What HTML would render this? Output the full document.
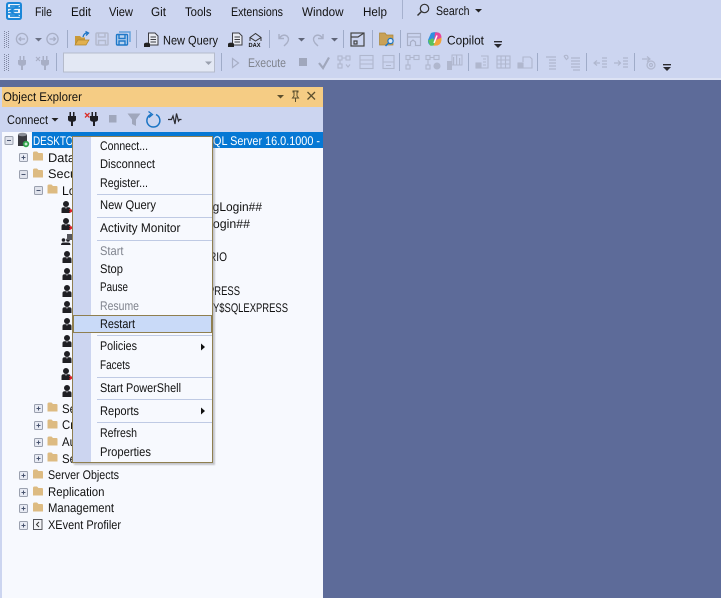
<!DOCTYPE html>
<html><head><meta charset="utf-8"><title>SSMS Object Explorer</title>
<style>
html,body{margin:0;padding:0;width:721px;height:598px;overflow:hidden;background:#5D6B99}
svg{display:block;filter:blur(.3px)}
text{font-family:"Liberation Sans",sans-serif;font-size:12.5px;fill:#111;text-rendering:geometricPrecision}
.w{fill:#fff}
.dis{fill:#80848e}
</style></head><body>
<svg width="721" height="598" viewBox="0 0 721 598" xmlns="http://www.w3.org/2000/svg">
<defs>
<filter id="b" x="-10%" y="-10%" width="120%" height="120%"><feGaussianBlur stdDeviation="0.8"/></filter>
<g id="folder"><path d="M0 2 Q0 .5 1.500 .5 H4 L5.500 2 H9 Q10 2 10 3 V9.500 H0Z" fill="#DDBB82"/></g>
<g id="plus"><rect x=".5" y=".5" width="8" height="8" rx="1" fill="#E8EBF4" stroke="#9AA0AE"/><path d="M2.500 4.500H6.500M4.500 2.500V6.500" stroke="#4A5570" fill="none"/></g>
<g id="minus"><rect x=".5" y=".5" width="8" height="8" rx="1" fill="#E0E3EC" stroke="#9AA0AE"/><path d="M2.500 4.500H6.500" stroke="#4A5570" fill="none"/></g>
<g id="user"><circle cx="5" cy="3" r="3" fill="#1f1f24"/><path d="M0.500 12V8.300Q0.500 6.300 2.500 6.300H7.500Q9.500 6.300 9.500 8.300V12Z" fill="#1f1f24"/><path d="M4.300 6.500L5 8L5.700 6.500Z" fill="#d8d8e0"/></g>
<g id="userx"><use href="#user"/><path d="M8.500 8l3.500 3.500M12 8l-3.500 3.500" stroke="#E0202A" stroke-width="1.500"/></g>
<g id="plug"><path d="M1.500 0H3V4H5V0H6.500V4H8V7.500Q8 9.500 5 9.700V14H3V9.700Q0 9.500 0 7.500V4H1.500Z"/></g>
<path id="tri" d="M0 0H7L3.500 3.500Z"/>
<g id="ovf"><path d="M0 0H8V1.400H0Z M0 3H8L4 7Z" fill="#2a2a30"/></g>
<g id="grip"><path d="M.5 0V17M2.500 1V17M4.500 0V17" stroke="#7f86a0" stroke-dasharray="1 1" fill="none"/></g>
</defs>

<rect width="721" height="80" fill="#CCD5F0"/>
<rect y="78" width="721" height="2" fill="#DCE2F4"/>
<rect y="80" width="721" height="518" fill="#5D6B99"/>

<!-- App logo -->
<g fill="none" stroke="#1A86D8">
<path d="M9 3H19Q21 3 21 5V17Q21 19 19 19H9Q7 19 7 17V5Q7 3 9 3Z" fill="#EAF2FA" stroke-width="2"/>
<path d="M7 8H21M7 14H21M10 6H18L10 11H18M10 11L18 16H10" stroke-width="1.700"/>
</g>

<!-- Menu -->
<text x="35" y="16" textLength="17" lengthAdjust="spacingAndGlyphs">File</text>
<text x="71" y="16" textLength="20" lengthAdjust="spacingAndGlyphs">Edit</text>
<text x="109" y="16" textLength="24" lengthAdjust="spacingAndGlyphs">View</text>
<text x="151" y="16" textLength="15" lengthAdjust="spacingAndGlyphs">Git</text>
<text x="185" y="16" textLength="26.500" lengthAdjust="spacingAndGlyphs">Tools</text>
<text x="231" y="16" textLength="52" lengthAdjust="spacingAndGlyphs">Extensions</text>
<text x="302" y="16" textLength="41.500" lengthAdjust="spacingAndGlyphs">Window</text>
<text x="363" y="16" textLength="24" lengthAdjust="spacingAndGlyphs">Help</text>
<rect x="402" y="0" width="1" height="19" fill="#A6B1CE"/>
<g fill="none" stroke="#333" stroke-width="1.200"><circle cx="424.500" cy="8.500" r="4.200"/><path d="M421.500 11.500L417.500 15.500" stroke-width="1.500"/></g>
<text x="436" y="15" textLength="33.500" lengthAdjust="spacingAndGlyphs">Search</text>
<use href="#tri" x="475" y="9" fill="#222"/>

<!-- Toolbar row 1 -->
<use href="#grip" x="4" y="31"/>
<g fill="none" stroke="#A8AFC6" stroke-width="1.300">
<circle cx="22" cy="39" r="5.600"/><path d="M25 39H19M21 37L19 39L21 41"/>
<circle cx="52.500" cy="39" r="5.600"/><path d="M49.500 39H55.500M53.500 37L55.500 39L53.500 41"/>
</g>
<use href="#tri" x="35" y="38" fill="#6a7084"/>
<rect x="67" y="30" width="1" height="18" fill="#9FABC8"/>
<path d="M75 36H80L81.500 37.500H85V40H78L75.500 45H75Z" fill="#C99A3A"/><path d="M75 45L78 40H89L86 45Z" fill="#E2B04E" stroke="#B0862E" stroke-width=".7"/>
<path d="M83 37Q84 33 87 33M85.500 31.500L88.500 33L86 35.500" fill="none" stroke="#1B74C4" stroke-width="1.300"/>
<g fill="none" stroke="#B3BACE" stroke-width="1.500"><rect x="96" y="33" width="12" height="12" rx="1"/><path d="M98.500 33V37H105V33M98.500 45V40.500H105.500V45"/></g>
<g fill="none" stroke="#1F78C8" stroke-width="1.400"><path d="M119 32H130V42" stroke="#5FA0DA"/><rect x="116.500" y="34.500" width="11" height="10.500" rx="1" fill="#BBD4EF"/><path d="M119 35V38.500H125V35M119 45V41H125V45"/></g>
<rect x="136" y="30" width="1" height="18" fill="#9FABC8"/>
<g id="nq"><path d="M148.500 33H155L158 36V45H148.500Z" fill="#E9EBF2" stroke="#3c3c42"/><path d="M150.500 37H156M150.500 39.500H156M150.500 42H156" stroke="#3c3c42"/><ellipse cx="147" cy="44" rx="3" ry="1.400" fill="#222"/><rect x="144" y="44" width="6" height="3" fill="#222"/></g>
<text x="163" y="44.500" textLength="55" lengthAdjust="spacingAndGlyphs">New Query</text>
<use href="#nq" x="84"/>
<g fill="none" stroke="#333"><path d="M250 37.500L255.500 33.500L261 37.500L255.500 41Z"/><path d="M250 38V41M261 38V41"/></g>
<text x="248.500" y="47" textLength="12" lengthAdjust="spacingAndGlyphs" style="font-size:6px;font-weight:bold">DAX</text>
<rect x="269" y="30" width="1" height="18" fill="#9FABC8"/>
<g fill="none" stroke="#A8AFC6" stroke-width="1.400"><path d="M279 34V38.500H284M279.500 38Q283 33.500 287 36Q290 39 287 43L284 46"/><path d="M323 34V38.500H318M322.500 38Q319 33.500 315 36Q312 39 315 43L318 46"/></g>
<use href="#tri" x="298" y="38" fill="#5f6578"/>
<use href="#tri" x="331" y="38" fill="#5f6578"/>
<rect x="343" y="30" width="1" height="18" fill="#9FABC8"/>
<g fill="none" stroke="#444" stroke-width="1.200"><rect x="351" y="33" width="13" height="13"/><path d="M351 37H358L364 33M354 41h3v3h-3z"/></g>
<rect x="372" y="30" width="1" height="18" fill="#9FABC8"/>
<path d="M379.500 33H385L386.500 35H393V45H379.500Z" fill="#C9A156" stroke="#A98538" stroke-width=".7"/>
<circle cx="390.500" cy="41" r="2.600" fill="#D8E6F7" stroke="#1B74C4" stroke-width="1.200"/><path d="M388.500 43L385.500 46" stroke="#1B74C4" stroke-width="1.500"/>
<rect x="400" y="30" width="1" height="18" fill="#9FABC8"/>
<g fill="none" stroke="#A8AFC6" stroke-width="1.200"><rect x="407.500" y="33.500" width="13" height="12"/><path d="M407.500 37H420.500"/><path d="M410.500 46V42L413 40L415.500 42V46" fill="#CCD5F0"/></g>
<g>
<path d="M431 33Q434 31.500 438 32.500L436 40Q434 46 431 45.500Q427.500 44.500 428 40Z" fill="#2E8FE0"/>
<path d="M435 32.500Q441 31.500 441.500 37L440.500 41L434 41Z" fill="#E8479A"/>
<path d="M428 40.500L433 38L436 44Q433 46.500 430 45.500Z" fill="#5BC25C"/>
<path d="M436 40L441.500 37.500Q442 44 437.500 45.500L433.500 45.800Z" fill="#F2A33A"/>
<path d="M437 35.500L434 43" stroke="#fff" stroke-width="1.500"/>
</g>
<text x="447" y="44.500" textLength="37" lengthAdjust="spacingAndGlyphs">Copilot</text>
<use href="#ovf" x="494" y="41"/>

<!-- Toolbar row 2 -->
<use href="#grip" x="4" y="54"/>
<use href="#plug" x="18" y="56" fill="#A8AFC6"/>
<use href="#plug" x="41" y="56" fill="#A8AFC6"/>
<path d="M36 57l4 4M40 57l-4 4" stroke="#A8AFC6" stroke-width="1.200"/>
<rect x="56" y="53" width="1" height="18" fill="#9FABC8"/>
<rect x="63.500" y="53" width="151" height="19" fill="#E3E8F4" stroke="#B5BBCB"/>
<use href="#tri" x="205" y="61.500" fill="#9aa0ae"/>
<rect x="221" y="53" width="1" height="18" fill="#9FABC8"/>
<path d="M232.500 58.500L238.500 63L232.500 67.500Z" fill="none" stroke="#A8AFC6" stroke-width="1.200"/>
<text x="248" y="67" textLength="38" lengthAdjust="spacingAndGlyphs" class="dis">Execute</text>
<rect x="299" y="58" width="8" height="8" fill="#A0A7BC"/>
<path d="M319 63L323 68L329 57.500" fill="none" stroke="#A0A7BC" stroke-width="2.200"/>
<g fill="none" stroke="#B0B7CE" stroke-width="1.100">
<rect x="338" y="56" width="4" height="4"/><rect x="346" y="56" width="4" height="4"/><rect x="338" y="64" width="4" height="4"/><path d="M346 64.500L348 67L350 64.500"/><path d="M340 60V64M342 58H346"/>
<rect x="360" y="55.500" width="13" height="13"/><path d="M360 60H373M360 64H373"/>
<rect x="383" y="55.500" width="11" height="13"/><path d="M383 62H394M386 65.500H391"/>
</g>
<rect x="399" y="53" width="1" height="18" fill="#9FABC8"/>
<g fill="none" stroke="#B0B7CE" stroke-width="1.100">
<rect x="406" y="55.500" width="4" height="4"/><rect x="414" y="55.500" width="5" height="4"/><rect x="406" y="65" width="4" height="4"/><path d="M408 60V65M410 57.500H414"/>
<rect x="426" y="55.500" width="4" height="4"/><rect x="434" y="55.500" width="5" height="4"/><rect x="426" y="65" width="4" height="4"/><path d="M428 60V65M430 57.500H434"/><circle cx="437" cy="66" r="3" fill="#B0B7CE"/>
</g>
<g fill="#B0B7CE"><rect x="447" y="61" width="5" height="9"/><rect x="453" y="57" width="1.200" height="8"/><rect x="456" y="55" width="1.200" height="10"/><rect x="459" y="58" width="1.200" height="7"/></g>
<rect x="452" y="55" width="10" height="10" fill="none" stroke="#B0B7CE"/>
<rect x="468" y="53" width="1" height="18" fill="#9FABC8"/>
<g fill="none" stroke="#B0B7CE" stroke-width="1.100">
<path d="M481 56H488V68H477V64"/><rect x="476" y="63" width="5" height="5" fill="#B0B7CE"/><path d="M483 59H486M483 62H486M483 65H486"/>
<rect x="497" y="56" width="13" height="12"/><path d="M497 60H510M497 64H510M501 56V68M505.500 56V68"/>
<path d="M523 62V57H530L532 59V68H519"/><rect x="518" y="63" width="5" height="5" fill="#B0B7CE"/>
</g>
<rect x="537" y="53" width="1" height="18" fill="#9FABC8"/>
<g fill="none" stroke="#B0B7CE" stroke-width="1.200">
<path d="M546 57H556M549 60H556M549 63H556M549 66H556M549 69H556"/>
<path d="M564 56Q568 54 568 58L566 60M564 56L566 59M571 58H580M571 61H580M571 64H580M571 67H580M573 70H580"/>
</g>
<rect x="586" y="53" width="1" height="18" fill="#9FABC8"/>
<g fill="none" stroke="#B0B7CE" stroke-width="1.200">
<path d="M594 63H600M597 60.500L594 63L597 65.500M602 58H607M602 61H607M602 64H607M602 67H607"/>
<path d="M614 63H620M618 60.500L620.500 63L618 65.500M623 58H628M623 61H628M623 64H628M623 67H628"/>
</g>
<rect x="634" y="53" width="1" height="18" fill="#9FABC8"/>
<g fill="none" stroke="#B0B7CE" stroke-width="1.200"><path d="M642 59H650M647 56.500L650 59L647 61.500"/><circle cx="651" cy="65" r="4"/><circle cx="651" cy="65" r="1.500"/></g>
<use href="#ovf" x="663" y="64"/>

<!-- Object Explorer panel -->
<rect x="0" y="87" width="2" height="511" fill="#CCD5F0"/>
<rect x="2" y="87" width="321" height="20" fill="#F5CC84"/>
<text x="3" y="101" textLength="79" lengthAdjust="spacingAndGlyphs">Object Explorer</text>
<use href="#tri" x="277" y="95" fill="#5c4f2e"/>
<path d="M293 91H298V92H297V96L298.500 98H292.500L294 96V92H293ZM295.500 98V102" fill="none" stroke="#5c4f2e"/>
<path d="M307.500 92L315 99.500M315 92L307.500 99.500" stroke="#5c4f2e" stroke-width="1.300"/>

<rect x="2" y="107" width="321" height="25" fill="#CCD5F0"/>
<text x="7" y="124" textLength="41" lengthAdjust="spacingAndGlyphs">Connect</text>
<use href="#tri" x="51.500" y="118" fill="#222"/>
<use href="#plug" x="68" y="112" fill="#1f1f24"/>
<use href="#plug" x="90" y="112" fill="#1f1f24"/>
<path d="M85 113l4.500 4.500M89.500 113L85 117.500" stroke="#D9302A" stroke-width="1.300"/>
<rect x="109" y="115" width="7.500" height="7.500" fill="#A0A7BC"/>
<path d="M127.500 113.500H140.500L136 119.500V126L132 124V119.500Z" fill="#A0A7BC"/>
<path d="M151 114.500A6.500 6.500 0 1 0 156 114.600" fill="none" stroke="#1B74C4" stroke-width="1.500"/>
<path d="M148.500 111.500L152.500 114.500L149 117.500" fill="none" stroke="#1B74C4" stroke-width="1.300"/>
<path d="M168 119.500H171.500L173 116L175 124L176.500 113.500L178.500 121L179.500 119.500H181.500" fill="none" stroke="#2b2b30" stroke-width="1.200"/>

<!-- tree -->
<rect x="2" y="132" width="321" height="466" fill="#F7F9FE"/>
<use href="#minus" x="4.500" y="136"/>
<g><path d="M18 134.500H27V146H18Z" fill="#3A3A40"/><ellipse cx="22.500" cy="134.500" rx="4.500" ry="1.800" fill="#8B8E96"/><circle cx="26" cy="144" r="3.200" fill="#2FA34A"/><path d="M24.500 144H27.500M26 142.500V145.500" stroke="#fff"/></g>
<rect x="32" y="132" width="291" height="16" fill="#0678D4"/>
<text x="33" y="145" textLength="47" lengthAdjust="spacingAndGlyphs" class="w">DESKTOP</text>
<text x="213" y="145" textLength="107" lengthAdjust="spacingAndGlyphs" class="w">QL Server 16.0.1000 -</text>

<use href="#plus" x="19" y="153"/><use href="#folder" x="33" y="151"/>
<text x="48" y="162" textLength="27" lengthAdjust="spacingAndGlyphs">Data</text>
<use href="#minus" x="19" y="170"/><use href="#folder" x="33" y="168"/>
<text x="48" y="178" textLength="46" lengthAdjust="spacingAndGlyphs">Security</text>
<use href="#minus" x="34" y="186"/><use href="#folder" x="47.500" y="184"/>
<text x="62" y="195" textLength="36" lengthAdjust="spacingAndGlyphs">Logins</text>

<use href="#userx" x="61" y="201"/>
<use href="#userx" x="61" y="218"/>
<g transform="translate(61 234)"><circle cx="2.500" cy="6" r="1.800" fill="#1f1f24"/><circle cx="7" cy="6" r="1.800" fill="#1f1f24"/><path d="M0 11Q0 8.500 2.500 8.500H7Q9.500 8.500 9.500 11Z" fill="#1f1f24"/><rect x="6" y="0" width="5" height="6" fill="#55565c"/></g>
<use href="#user" x="62" y="251"/>
<use href="#user" x="62" y="268"/>
<use href="#user" x="62" y="285"/>
<use href="#user" x="62" y="301"/>
<use href="#user" x="62" y="318"/>
<use href="#user" x="62" y="335"/>
<use href="#user" x="62" y="351"/>
<use href="#userx" x="61" y="368"/>
<use href="#user" x="62" y="385"/>

<text x="206" y="211" textLength="56" lengthAdjust="spacingAndGlyphs">ngLogin##</text>
<text x="206" y="228" textLength="44" lengthAdjust="spacingAndGlyphs">Login##</text>
<text x="209" y="261" textLength="18" lengthAdjust="spacingAndGlyphs">RIO</text>
<text x="208" y="295" textLength="32" lengthAdjust="spacingAndGlyphs">PRESS</text>
<text x="213" y="312" textLength="75" lengthAdjust="spacingAndGlyphs">Y$SQLEXPRESS</text>

<use href="#plus" x="34" y="404"/><use href="#folder" x="47.500" y="402"/><text x="62" y="413" textLength="14" lengthAdjust="spacingAndGlyphs">Se</text>
<use href="#plus" x="34" y="421"/><use href="#folder" x="47.500" y="419"/><text x="62" y="429" textLength="12" lengthAdjust="spacingAndGlyphs">Cr</text>
<use href="#plus" x="34" y="438"/><use href="#folder" x="47.500" y="436"/><text x="62" y="446" textLength="14" lengthAdjust="spacingAndGlyphs">Au</text>
<use href="#plus" x="34" y="454"/><use href="#folder" x="47.500" y="452"/><text x="62" y="463" textLength="14" lengthAdjust="spacingAndGlyphs">Se</text>

<use href="#plus" x="19" y="471"/><use href="#folder" x="33" y="469"/>
<text x="48" y="479" textLength="71" lengthAdjust="spacingAndGlyphs">Server Objects</text>
<use href="#plus" x="19" y="488"/><use href="#folder" x="33" y="486"/>
<text x="48" y="496" textLength="56.500" lengthAdjust="spacingAndGlyphs">Replication</text>
<use href="#plus" x="19" y="504"/><use href="#folder" x="33" y="502"/>
<text x="48" y="512" textLength="66" lengthAdjust="spacingAndGlyphs">Management</text>
<use href="#plus" x="19" y="521"/>
<rect x="33.500" y="519.500" width="8.500" height="10" fill="#F3F4F8" stroke="#55565c"/><path d="M39 522L36.500 524.500L39 527" fill="none" stroke="#333"/>
<text x="48" y="529" textLength="73" lengthAdjust="spacingAndGlyphs">XEvent Profiler</text>

<!-- Context menu -->
<rect x="74" y="138" width="141" height="327" fill="#77777f" opacity=".4" filter="url(#b)"/>
<rect x="72.500" y="136.500" width="140" height="326" fill="#F7F9FE" stroke="#8F7F50"/>
<rect x="73" y="137" width="18" height="325" fill="#CCD5F0"/>
<rect x="73.500" y="315.500" width="138" height="17" fill="#C9DAF8" stroke="#8F7F50"/>
<g fill="#BFCAE4">
<rect x="97" y="194" width="115" height="1"/>
<rect x="97" y="217" width="115" height="1"/>
<rect x="97" y="240" width="115" height="1"/>
<rect x="97" y="335" width="115" height="1"/>
<rect x="97" y="377" width="115" height="1"/>
<rect x="97" y="399" width="115" height="1"/>
<rect x="97" y="422" width="115" height="1"/>
</g>
<text x="100" y="150" textLength="48" lengthAdjust="spacingAndGlyphs">Connect...</text>
<text x="100" y="168" textLength="55" lengthAdjust="spacingAndGlyphs">Disconnect</text>
<text x="100" y="187" textLength="48" lengthAdjust="spacingAndGlyphs">Register...</text>
<text x="100" y="209" textLength="56" lengthAdjust="spacingAndGlyphs">New Query</text>
<text x="100" y="232" textLength="80.500" lengthAdjust="spacingAndGlyphs">Activity Monitor</text>
<text x="100" y="255" textLength="23.500" lengthAdjust="spacingAndGlyphs" class="dis">Start</text>
<text x="100" y="273" textLength="23" lengthAdjust="spacingAndGlyphs">Stop</text>
<text x="100" y="291" textLength="28" lengthAdjust="spacingAndGlyphs">Pause</text>
<text x="100" y="310" textLength="39" lengthAdjust="spacingAndGlyphs" class="dis">Resume</text>
<text x="100" y="328" textLength="35" lengthAdjust="spacingAndGlyphs">Restart</text>
<text x="100" y="350" textLength="37" lengthAdjust="spacingAndGlyphs">Policies</text>
<path d="M201 343.500L205 347L201 350.500Z" fill="#111"/>
<text x="100" y="369" textLength="30" lengthAdjust="spacingAndGlyphs">Facets</text>
<text x="100" y="392" textLength="81" lengthAdjust="spacingAndGlyphs">Start PowerShell</text>
<text x="100" y="415" textLength="39" lengthAdjust="spacingAndGlyphs">Reports</text>
<path d="M201 407.500L205 411L201 414.500Z" fill="#111"/>
<text x="100" y="437" textLength="37" lengthAdjust="spacingAndGlyphs">Refresh</text>
<text x="100" y="456" textLength="51" lengthAdjust="spacingAndGlyphs">Properties</text>
</svg>
</body></html>
